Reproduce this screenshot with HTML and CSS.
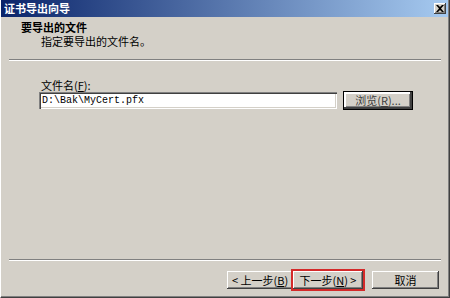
FILE: index.html
```html
<!DOCTYPE html>
<html lang="zh-CN">
<head>
    <meta charset="UTF-8">
    <title>证书导出向导</title>
    <link rel="stylesheet" href="styles.css">
</head>
<body>
    <div class="wizard">
        <div class="titlebar">
            <span class="title-text">证书导出向导</span>
            <span class="close-btn">
                <svg width="8" height="7" viewBox="0 0 8 7"><path d="M0 0h2l2 2 2-2h2L5 3.5 8 7H6L4 5 2 7H0l3-3.5z" fill="#000"/></svg>
            </span>
        </div>

        <div class="header">
            <div class="header-title">要导出的文件</div>
            <div class="header-sub">指定要导出的文件名。</div>
        </div>
        <div class="separator"></div>

        <div class="content">
            <div class="field-label">文件名(<u>F</u>):</div>
            <div class="field-row">
                <div class="textbox">D:\Bak\MyCert.pfx</div>
                <button class="btn browse-btn">浏览(<u>R</u>)...</button>
            </div>
        </div>

        <div class="separator bottom-sep"></div>
        <div class="button-group">
            <button class="btn back-btn">&lt; 上一步(<u>B</u>)</button>
            <button class="btn next-btn">下一步(<u>N</u>) &gt;</button>
            <button class="btn cancel-btn">取消</button>
        </div>
    </div>
</body>
</html>
```

FILE: styles.css
```css
html, body {
    margin: 0;
    padding: 0;
    width: 450px;
    height: 298px;
    overflow: hidden;
    background-color: #d4d0c8;
    font-family: "Noto Sans CJK SC", sans-serif;
    font-size: 11px;
    color: #000;
}

.wizard {
    box-sizing: border-box;
    width: 450px;
    height: 298px;
    display: flex;
    flex-direction: column;
    border-left: 1px solid #ffffff;
    border-right: 1px solid #404040;
    border-bottom: 1px solid #404040;
    box-shadow: inset -1px -1px 0 #808080;
}

.titlebar {
    height: 17px;
    display: flex;
    align-items: center;
    justify-content: space-between;
    padding: 0 2px 0 3px;
    margin-right: 1px;
    background: linear-gradient(to right, #0a246a, #a6caf0);
    color: #fff;
    font-weight: bold;
    font-size: 11px;
    line-height: 17px;
}

.close-btn {
    width: 12px;
    height: 11px;
    display: flex;
    align-items: center;
    justify-content: center;
    background-color: #d4d0c8;
    box-shadow: inset -1px -1px 0 #404040, inset 1px 1px 0 #ffffff, inset -2px -2px 0 #808080;
}

.header {
    height: 42px;
    box-sizing: border-box;
    padding: 3px 0 0 20px;
    line-height: 14px;
}

.header-title {
    font-weight: bold;
}

.header-sub {
    padding-left: 20px;
}

.separator {
    height: 0;
    margin: 0 8px;
    border-top: 1px solid #808080;
    border-bottom: 1px solid #ffffff;
}

.content {
    padding: 17px 0 0 38px;
    line-height: 14px;
}

.field-label {
    padding-left: 2px;
}

.field-row {
    display: flex;
    gap: 7px;
}

.textbox {
    box-sizing: border-box;
    width: 298px;
    height: 17px;
    padding: 2px 3px 0 3px;
    background-color: #fff;
    font-family: "Liberation Mono", monospace;
    font-size: 10px;
    line-height: 13px;
    box-shadow: inset 1px 1px 0 #808080, inset 2px 2px 0 #404040, inset -1px -1px 0 #ffffff, inset -2px -2px 0 #d4d0c8;
}

.btn {
    box-sizing: border-box;
    height: 18px;
    padding: 0;
    border: none;
    background-color: #d4d0c8;
    font-family: "Noto Sans CJK SC", sans-serif;
    font-size: 11px;
    line-height: 13px;
    color: #000;
    box-shadow: inset -1px -1px 0 #404040, inset 1px 1px 0 #ffffff, inset -2px -2px 0 #808080;
}

.browse-btn {
    width: 68px;
    height: 17px;
    box-shadow: inset -2px -2px 0 #404040, inset 2px 2px 0 #ffffff, inset -3px -3px 0 #808080, 0 0 0 1px #000;
    color: #404040;
}

.bottom-sep {
    margin-top: auto;
}

.button-group {
    display: flex;
    padding: 10px 0 8px 226px;
}

.back-btn {
    width: 66px;
}

.next-btn {
    width: 70px;
    outline: 2px solid #d42a2a;
    outline-offset: 0;
}

.cancel-btn {
    width: 67px;
    margin-left: 9px;
}
```
